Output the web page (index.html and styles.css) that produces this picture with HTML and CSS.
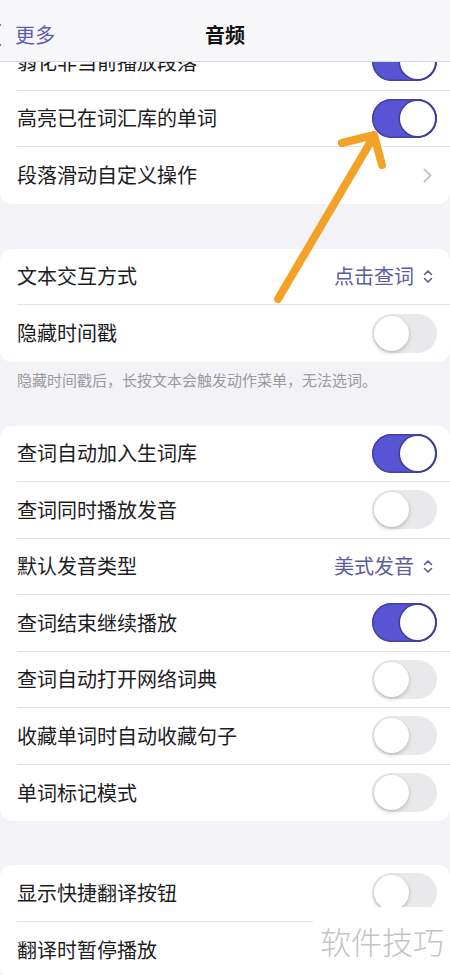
FILE: index.html
```html
<!DOCTYPE html>
<html lang="zh">
<head>
<meta charset="utf-8">
<title>音频</title>
<link rel="stylesheet" href="styles.css">
</head>
<body>
<div class="screen">
  <header class="nav">
    <div class="back">
      <svg class="back-chev" width="14" height="24" viewBox="0 0 14 24"><path d="M12 2 L2 12 L12 22" fill="none" stroke="#6a6ab4" stroke-width="2.2" stroke-linecap="round" stroke-linejoin="round"/></svg>
      <span>更多</span>
    </div>
    <div class="title">音频</div>
  </header>

  <main class="content">
    <section class="card">
      <div class="row"><span class="label">弱化非当前播放段落</span><span class="switch on"><span class="knob"></span></span></div>
      <div class="row"><span class="label">高亮已在词汇库的单词</span><span class="switch on"><span class="knob"></span></span></div>
      <div class="row"><span class="label">段落滑动自定义操作</span><svg class="chev" width="9" height="15" viewBox="0 0 9 15"><path d="M1.5 1.5 L7.5 7.5 L1.5 13.5" fill="none" stroke="#c4c4c8" stroke-width="2" stroke-linecap="round" stroke-linejoin="round"/></svg></div>
    </section>

    <section class="card gap1">
      <div class="row"><span class="label">文本交互方式</span><span class="value">点击查词<svg class="updown" width="10" height="15" viewBox="0 0 10 15"><path d="M1.5 5.5 L5 2 L8.5 5.5 M1.5 9.5 L5 13 L8.5 9.5" fill="none" stroke="#5c5c9e" stroke-width="1.6" stroke-linecap="round" stroke-linejoin="round"/></svg></span></div>
      <div class="row"><span class="label">隐藏时间戳</span><span class="switch"><span class="knob"></span></span></div>
    </section>
    <p class="note">隐藏时间戳后，长按文本会触发动作菜单，无法选词。</p>

    <section class="card">
      <div class="row"><span class="label">查词自动加入生词库</span><span class="switch on"><span class="knob"></span></span></div>
      <div class="row"><span class="label">查词同时播放发音</span><span class="switch"><span class="knob"></span></span></div>
      <div class="row"><span class="label">默认发音类型</span><span class="value">美式发音<svg class="updown" width="10" height="15" viewBox="0 0 10 15"><path d="M1.5 5.5 L5 2 L8.5 5.5 M1.5 9.5 L5 13 L8.5 9.5" fill="none" stroke="#5c5c9e" stroke-width="1.6" stroke-linecap="round" stroke-linejoin="round"/></svg></span></div>
      <div class="row"><span class="label">查词结束继续播放</span><span class="switch on"><span class="knob"></span></span></div>
      <div class="row"><span class="label">查词自动打开网络词典</span><span class="switch"><span class="knob"></span></span></div>
      <div class="row"><span class="label">收藏单词时自动收藏句子</span><span class="switch"><span class="knob"></span></span></div>
      <div class="row"><span class="label">单词标记模式</span><span class="switch"><span class="knob"></span></span></div>
    </section>

    <section class="card gap3">
      <div class="row"><span class="label">显示快捷翻译按钮</span><span class="switch"><span class="knob"></span></span></div>
      <div class="row"><span class="label">翻译时暂停播放</span><span class="switch"><span class="knob"></span></span></div>
    </section>
  </main>

  <svg class="arrow" width="450" height="975" viewBox="0 0 450 975">
    <path d="M278 299 L374 136 M342 143 L374 135 L382 165" fill="none" stroke="#f3a227" stroke-width="8" stroke-linecap="round" stroke-linejoin="round"/>
  </svg>

  <div class="watermark">软件技巧</div>
</div>
</body>
</html>
```

FILE: styles.css
```css
* { box-sizing: border-box; }

html, body {
  margin: 0;
  padding: 0;
}

body {
  background: #f2f2f7;
  font-family: "Noto Sans CJK SC", "Noto Sans", sans-serif;
  color: #1c1c1e;
}

.screen {
  position: relative;
  width: 450px;
  height: 975px;
  overflow: hidden;
  background: #f2f2f7;
}

.nav {
  position: absolute;
  top: 0;
  left: 0;
  right: 0;
  height: 62px;
  background: #f7f7f9;
  border-bottom: 1px solid #d8d8dc;
  display: flex;
  align-items: center;
  justify-content: center;
  z-index: 2;
}

.back {
  position: absolute;
  left: -12px;
  top: 22px;
  display: flex;
  align-items: center;
  gap: 13px;
  color: #5c5cb0;
  font-size: 20px;
  line-height: 26px;
}

.title {
  font-size: 20px;
  font-weight: 700;
  line-height: 26px;
  margin-top: 8px;
  color: #111;
}

.content {
  padding-top: 34px;
}

.card {
  background: #fff;
  border-radius: 12px;
}

.gap1 { margin-top: 45px; }
.gap3 { margin-top: 44px; }

.row {
  height: 56.5px;
  margin-left: 17px;
  padding-right: 13px;
  display: flex;
  align-items: center;
  justify-content: space-between;
  border-bottom: 1px solid #e3e3e6;
}

.row:last-child { border-bottom: none; }

.label {
  font-size: 20px;
  line-height: 26px;
  color: #1c1c1e;
}

.chev { margin-right: 5px; }

.value {
  display: flex;
  align-items: center;
  gap: 9px;
  font-size: 20px;
  line-height: 26px;
  color: #5c5c9e;
  margin-right: 4px;
}

.note {
  margin: 0;
  height: 64px;
  padding: 7px 0 0 17px;
  font-size: 15px;
  line-height: 22px;
  color: #9a9a9f;
}

.switch {
  width: 65px;
  height: 39px;
  border-radius: 20px;
  background: #e9e9eb;
  display: flex;
  align-items: center;
  justify-content: flex-start;
  padding: 2px;
}

.switch.on {
  background: #5755d3;
  justify-content: flex-end;
  box-shadow: inset 0 0 0 1.5px #45439e;
}

.knob {
  width: 35px;
  height: 35px;
  border-radius: 50%;
  background: #fff;
  box-shadow: 0 2px 4px rgba(0, 0, 0, 0.18), 0 0 0 0.5px rgba(0, 0, 0, 0.06);
}

.switch.on .knob {
  box-shadow: 0 0 0 1.5px #3f3d92;
}

.arrow {
  position: absolute;
  left: 0;
  top: 0;
  z-index: 3;
  pointer-events: none;
}

.watermark {
  position: absolute;
  left: 313px;
  top: 907px;
  width: 137px;
  height: 68px;
  background: #fff;
  z-index: 4;
  font-size: 31px;
  line-height: 40px;
  padding: 14px 0 0 7px;
  color: #c4c4c4;
  font-weight: 300;
}
```
